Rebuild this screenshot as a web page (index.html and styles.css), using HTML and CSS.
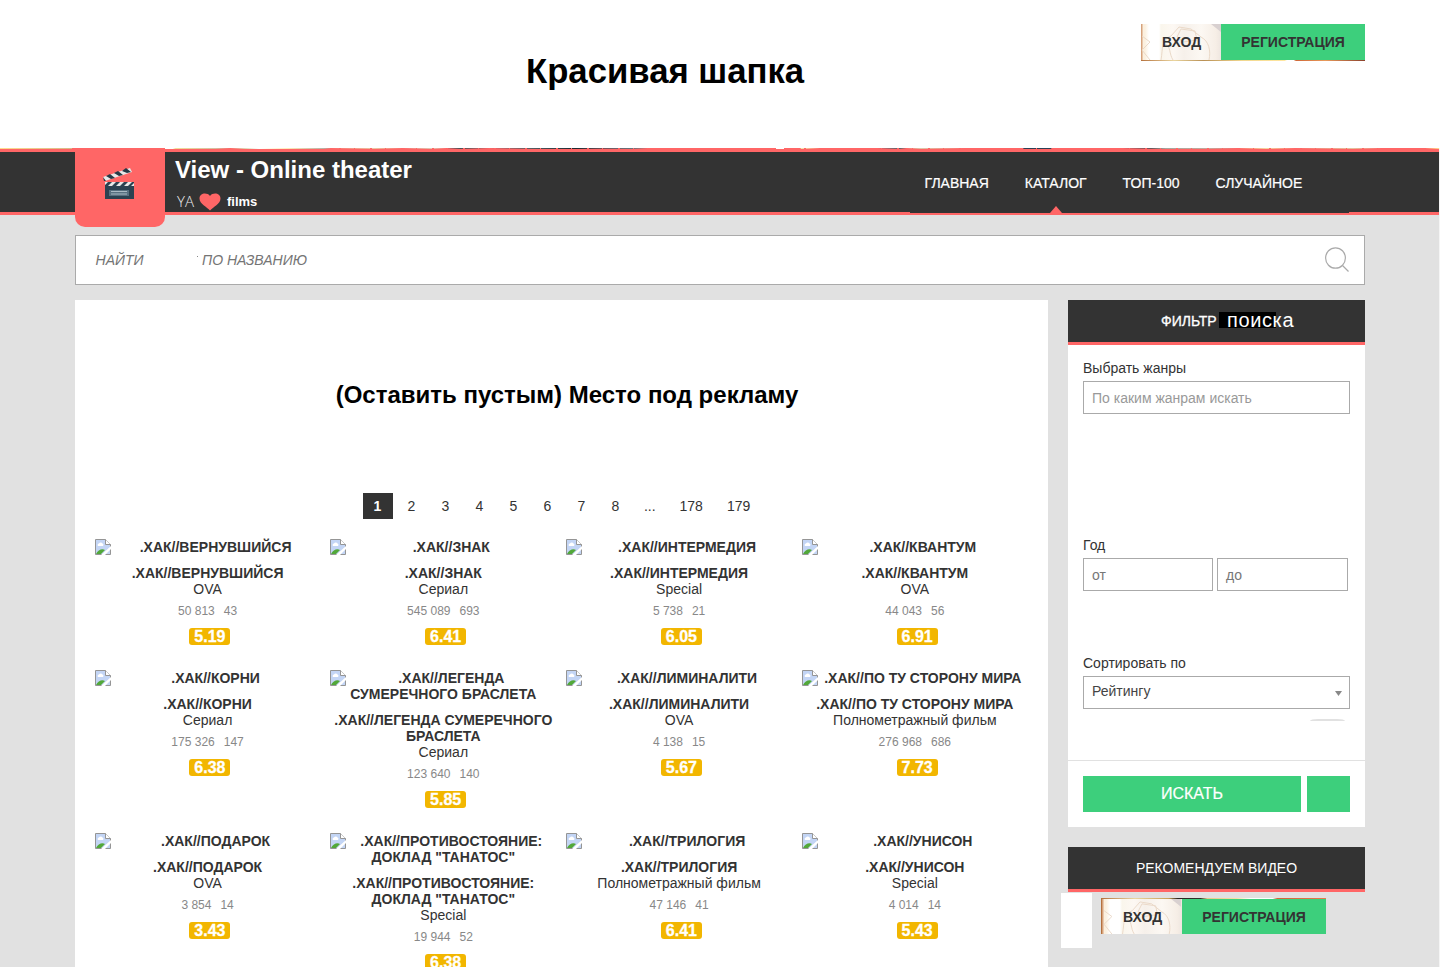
FILE: index.html
```html
<!DOCTYPE html>
<html lang="ru">
<head>
<meta charset="utf-8">
<title>View - Online theater</title>
<link rel="stylesheet" href="styles.css">
</head>
<body>
<svg class="defs" width="0" height="0"><symbol id="pic" viewBox="0 0 16 16"><path d="M.5.5h10l5 5v10H.5z" fill="#c3d5f5" stroke="#959595"/><path d="M10.500.5v5h5" fill="#fff" stroke="#959595"/><path d="M3 7a1.500 1.500 0 0 1 1-2.500 2 2 0 0 1 3.500 0A1.500 1.500 0 0 1 8 7z" fill="#fff"/><path d="M1 15c2-4 6-6 9-4l-4 4z" fill="#52a839"/><path d="M16 7v3l-6 6H6z" fill="#fff"/></symbol>
<symbol id="art" viewBox="0 0 80 36"><path d="M20 36c2-12 0-20 10-24l8-9 12 2 10 8c8 4 10 14 8 23M36 13l4-8 14 2 2 9-14 2zM24 20c6 2 4 10 8 16M1 12l8 6-8 8 8 10" fill="none" stroke="#ead9c8"/><path d="M70 0h10v8z" fill="#d8d0d0"/></symbol></svg>
<div class="page">
<header class="top"><h1>Красивая шапка</h1>
<div class="auth auth-top"><a class="login"><svg class="art"><use href="#art"/></svg><span>ВХОД</span></a><a class="reg">РЕГИСТРАЦИЯ</a></div></header>
<div class="strip"></div>
<div class="bar"><div class="wrap bar-in">
<div class="logo"><svg width="32" height="32" viewBox="0 0 32 32"><path d="M0 9 27 0l2 4L2 13z" fill="#e8e8e8"/><path d="m3 8 5 3 4-1-5-4zM11 5l5 3 4-1-5-4zM19 3l5 2 4-1-5-4zM0 9l3 4-2 0z" fill="#263845"/><path d="M2 14h29v17H2z" fill="#2c4251"/><path d="M2 14h3l-3 3zM9 14h4l-4 4H5zM17 14h4l-4 4h-4zM25 14h4l-4 4h-4zM31 15v3h-3z" fill="#e8e8e8"/><path d="M6 22h20v6H6z" fill="#577080"/><path d="M8 23.500h16M8 26h16" stroke="#a9bac4"/></svg></div>
<div class="brand"><div class="name">View - Online theater</div><div class="tag"><span class="ya">YA</span><svg width="22" height="19" viewBox="0 0 22 19"><path d="M11 18.500C8 15 .5 12 .5 6.500 .5 1 8 0 11 4 14 0 21.500 1 21.500 6.500c0 5.500-7.500 8.500-10.500 12z" fill="#f66"/></svg><b>films</b></div></div>
<nav class="menu"><a>ГЛАВНАЯ</a><a class="cur">КАТАЛОГ</a><a>ТОП-100</a><a>СЛУЧАЙНОЕ</a></nav>
</div></div>
<div class="wrap search"><span class="find">НАЙТИ</span><span class="dot"></span><span class="by">ПО НАЗВАНИЮ</span><svg width="26" height="26" viewBox="0 0 26 26"><ellipse cx="11.500" cy="11" rx="9.900" ry="10.200"/><path d="m18.500 18.500 6 6"/></svg></div>
<div class="wrap cols">
<main class="main">
<h2>(Оставить пустым) Место под рекламу</h2>
<div class="pager"><b>1</b><a>2</a><a>3</a><a>4</a><a>5</a><a>6</a><a>7</a><a>8</a><a>...</a><a class="w">178</a><a class="w">179</a></div>
<div class="grid">
<article><div class="alt"><svg class="pic"><use href="#pic"/></svg>.ХАК//ВЕРНУВШИЙСЯ</div><h3>.ХАК//ВЕРНУВШИЙСЯ</h3><p>OVA</p><div class="stat"><span>50 813</span><span>43</span></div><div class="rate">5.19</div></article>
<article><div class="alt"><svg class="pic"><use href="#pic"/></svg>.ХАК//ЗНАК</div><h3>.ХАК//ЗНАК</h3><p>Сериал</p><div class="stat"><span>545 089</span><span>693</span></div><div class="rate">6.41</div></article>
<article><div class="alt"><svg class="pic"><use href="#pic"/></svg>.ХАК//ИНТЕРМЕДИЯ</div><h3>.ХАК//ИНТЕРМЕДИЯ</h3><p>Special</p><div class="stat"><span>5 738</span><span>21</span></div><div class="rate">6.05</div></article>
<article><div class="alt"><svg class="pic"><use href="#pic"/></svg>.ХАК//КВАНТУМ</div><h3>.ХАК//КВАНТУМ</h3><p>OVA</p><div class="stat"><span>44 043</span><span>56</span></div><div class="rate">6.91</div></article>
<article><div class="alt"><svg class="pic"><use href="#pic"/></svg>.ХАК//КОРНИ</div><h3>.ХАК//КОРНИ</h3><p>Сериал</p><div class="stat"><span>175 326</span><span>147</span></div><div class="rate">6.38</div></article>
<article><div class="alt"><svg class="pic"><use href="#pic"/></svg>.ХАК//ЛЕГЕНДА<br>СУМЕРЕЧНОГО БРАСЛЕТА</div><h3>.ХАК//ЛЕГЕНДА СУМЕРЕЧНОГО<br>БРАСЛЕТА</h3><p>Сериал</p><div class="stat"><span>123 640</span><span>140</span></div><div class="rate">5.85</div></article>
<article><div class="alt"><svg class="pic"><use href="#pic"/></svg>.ХАК//ЛИМИНАЛИТИ</div><h3>.ХАК//ЛИМИНАЛИТИ</h3><p>OVA</p><div class="stat"><span>4 138</span><span>15</span></div><div class="rate">5.67</div></article>
<article><div class="alt"><svg class="pic"><use href="#pic"/></svg>.ХАК//ПО ТУ СТОРОНУ МИРА</div><h3>.ХАК//ПО ТУ СТОРОНУ МИРА</h3><p>Полнометражный фильм</p><div class="stat"><span>276 968</span><span>686</span></div><div class="rate">7.73</div></article>
<article><div class="alt"><svg class="pic"><use href="#pic"/></svg>.ХАК//ПОДАРОК</div><h3>.ХАК//ПОДАРОК</h3><p>OVA</p><div class="stat"><span>3 854</span><span>14</span></div><div class="rate">3.43</div></article>
<article><div class="alt"><svg class="pic"><use href="#pic"/></svg>.ХАК//ПРОТИВОСТОЯНИЕ:<br>ДОКЛАД "ТАНАТОС"</div><h3>.ХАК//ПРОТИВОСТОЯНИЕ:<br>ДОКЛАД "ТАНАТОС"</h3><p>Special</p><div class="stat"><span>19 944</span><span>52</span></div><div class="rate">6.38</div></article>
<article><div class="alt"><svg class="pic"><use href="#pic"/></svg>.ХАК//ТРИЛОГИЯ</div><h3>.ХАК//ТРИЛОГИЯ</h3><p>Полнометражный фильм</p><div class="stat"><span>47 146</span><span>41</span></div><div class="rate">6.41</div></article>
<article><div class="alt"><svg class="pic"><use href="#pic"/></svg>.ХАК//УНИСОН</div><h3>.ХАК//УНИСОН</h3><p>Special</p><div class="stat"><span>4 014</span><span>14</span></div><div class="rate">5.43</div></article>
</div>
</main>
<aside class="side">
<section class="panel">
<div class="head head-filter"><span>ФИЛЬТР</span><span class="big">поиска</span></div>
<div class="form">
<label>Выбрать жанры</label><div class="field ph">По каким жанрам искать</div>
<label class="year">Год</label><div class="row"><div class="field from">от</div><div class="field to">до</div></div>
<label class="sort">Сортировать по</label><div class="field select"><span>Рейтингу</span><i></i></div>
<div class="knob"></div>
</div>
<div class="actions"><button class="go">ИСКАТЬ</button><button class="sq"></button></div>
</section>
<section class="rec"><div class="head">РЕКОМЕНДУЕМ ВИДЕО</div>
<div class="float-box"></div>
<div class="auth auth-low"><a class="login"><svg class="art"><use href="#art"/></svg><span>ВХОД</span></a><a class="reg">РЕГИСТРАЦИЯ</a></div></section>
</aside>
</div>
</div>
</body>
</html>
```
FILE: styles.css
```css
* { box-sizing: border-box; margin: 0; padding: 0; }
html, body { height: 967px; overflow: hidden; }
body { font: 14px/16px "Liberation Sans", Arial, sans-serif; color: #333; background: #f5f5f5; }
.defs { position: absolute; }
.page { width: 1439px; height: 967px; background: #e1e1e1; }
.wrap { width: 1290px; margin-left: 75px; }
.top { position: relative; width: 1440px; height: 148px; background: #fff; padding: 50px 0 0 526px; }
h1 { font-size: 34.700px; line-height: 42px; color: #000; white-space: nowrap; }
.auth { position: absolute; display: flex; font-weight: bold; line-height: 36px; text-align: center; }
.auth-top { left: 1141px; top: 24px; border: solid; border-image: linear-gradient(90deg, #b4703c, #ead6a0 15%, #b99055 28%, #f0d78f 45%, #ffe6a0 64%, #fff 65%, #fff 68%, #cf6838 69%, #e89b5c 82%, #883f2b) 1; border-width: 0 0 1px; }
.login { position: relative; width: 80px; padding-left: 1px; background: linear-gradient(90deg, #d6a27b 0 1px, #fbf0df 2px 4px, #fff 8px 18px, #faf6ec 20px, #fdf8f3 32px, #f6f0ea 43px, #fcf8f3 60px, #f6eee6 75px, #eee6e0); }
.art { position: absolute; left: 0; top: 0; width: 80px; height: 36px; }
.login span { position: relative; }
.reg { width: 144px; background: #3dcf7c; }
.strip { height: 1px; background: repeating-linear-gradient(90deg, transparent 0 9px, #f66 9px 11px, transparent 11px 24px, #f66 24px 25px, transparent 25px 31px) 330px 0 / 1109px 1px no-repeat, linear-gradient(90deg, #ffdc91, #d7b989 5%, #f66 5%, #f66 11.400%, #fff 11.400%, #fff 12%, #f2de9c 12.200%, #d3bea0 15%, #f66 16%, #ded5b4 17%, #fff 18%, #ffe9b8 20%, #b6b0a4 22.500%, #f66 23%, #e9c8a4 26%, #f66 28%, #dfcbb5 30%, #f66 31%, #475156 32%, #f66 34%, #565b60 37%, #1b2830 40%, #7a525a 42%, #65757e 44%, #f66 45%, #f66 53.900%, #fff 53.900%, #fff 54.500%, #f66 54.500%, #f66 55.600%, #f4e7ad 55.700%, #f66 57%, #f66 61%, #53636b 62.500%, #f66 63%, #dcc9ab 64%, #f66 67%, #f66 71%, #2c4055 71.200%, #2c4055 73%, #f66 73.100%, #f66 78%, #6a5458 80%, #a6a59d 81%, #c4a89b 84%, #f66 86%, #f2d8a1 88%, #f66 90%, #e3c39e 94%, #f66 96%, #f66 99%, #ffdc91); }
.bar { height: 66px; background: #333; border-top: 3px solid #f66; border-bottom: 3px solid #f66; }
.bar-in { position: relative; display: flex; }
.logo { position: absolute; left: 0; top: -4px; width: 90px; height: 79px; background: #f66; border-radius: 0 0 10px 10px; padding: 20px 0 0 28px; }
.brand { padding-left: 100px; width: 835px; color: #fff; white-space: nowrap; }
.name { font: bold 24px/28px "Liberation Sans", Arial, sans-serif; padding-top: 4px; }
.tag { display: flex; align-items: center; height: 19px; margin-top: 8px; font-size: 13px; }
.tag svg { margin-right: 6px; }
.ya { width: 24px; padding-left: 2px; font: 300 15px/19px "Open Sans", "Noto Sans", sans-serif; color: #eee; }
.menu { display: flex; gap: 36px; width: 439px; height: 61px; padding-left: 14.600px; background: #333; color: #fff; line-height: 62px; white-space: nowrap; -webkit-text-stroke: .2px #fff; }
.cur { position: relative; }
.cur::after { content: ""; position: absolute; left: 25.500px; bottom: 0; border: 6px solid transparent; border-top: 0; border-bottom: 7px solid #f66; }
.search { display: flex; align-items: center; height: 50px; margin-top: 20px; padding: 0 14px 0 19.600px; border: 1px solid #aaa; background: #fff; font-style: italic; color: #757575; }
.find { width: 101.400px; }
.dot { width: 1px; height: 1px; background: #888; margin: -8px 4px 0 0; }
.search svg { margin-left: auto; fill: none; stroke: #aaa; stroke-width: 1.200; }
.cols { display: flex; justify-content: space-between; align-items: flex-start; margin-top: 15px; }
.main { width: 973px; height: 667px; background: #fff; padding: 80px 20px 0; }
h2 { font-size: 24px; line-height: 28px; padding: 1px 0 0 1px; margin-right: -10px; color: #000; width: 943px; text-align: center; }
.pager { display: flex; gap: 4px; margin: 84px 0 20px 268px; line-height: 26px; text-align: center; }
.pager b, .pager a { width: 30px; height: 26px; }
.pager b { background: #333; color: #fff; padding-right: 1px; }
.pager b + a { margin-left: -.7px; }
.pager a:nth-child(9) { width: 31px; }
.pager a.w { width: 43.500px; }
.grid { display: grid; grid-template-columns: repeat(4, 1fr); column-gap: 10px; margin: 0 .3px 0 -.3px; text-align: center; white-space: nowrap; }
article { padding-bottom: 25px; }
.alt { font-weight: bold; }
.pic { float: left; width: 16px; height: 16px; }
h3 { font-size: 14px; margin-top: 10px; }
.stat { display: flex; justify-content: center; gap: 9px; font-size: 12px; line-height: 14px; color: #888; margin-top: 7px; }
.rate { width: 41px; height: 17px; margin: 10px auto 0; position: relative; left: 2.300px; border-radius: 3px; background: #f2b600; color: #fff; font: bold 16px/17px "Liberation Sans", Arial, sans-serif; -webkit-text-stroke: .3px #fff; }
.side { width: 297px; }
.panel { height: 527px; background: #fff; }
.head { height: 45px; background: #333; border-bottom: 3px solid #f66; color: #fff; line-height: 42px; text-align: center; white-space: nowrap; }
.head-filter { display: flex; padding-left: 93px; -webkit-text-stroke: .3px #fff; }
.big { height: 16px; width: 57px; margin: 12px 0 0 2px; padding-left: 8.500px; background: #000; font: 20px/17px "Liberation Sans", Arial, sans-serif; letter-spacing: .6px; -webkit-text-stroke: 0; }
.form { height: 415px; padding: 15px 15px 0; }
label { display: block; margin-bottom: 5px; }
.field { height: 33px; padding-left: 8px; border: 1px solid #aaa; line-height: 33px; color: #777; }
.ph { color: #999; }
.year { margin-top: 123px; }
.row { display: flex; gap: 4px; }
.from { width: 130px; }
.to { width: 131px; }
.sort { margin-top: 64px; }
.select { display: flex; justify-content: space-between; padding-right: 7px; line-height: 29px; color: #444; }
.select i { margin-top: 14px; width: 7px; height: 5px; background: #888; clip-path: polygon(0 0, 100% 0, 50% 100%); }
.knob { width: 35px; height: 2px; margin: 10px 5px 0 auto; background: #e1e1e1; border-radius: 8px 8px 0 0 / 2px 2px 0 0; }
.actions { display: flex; gap: 6px; padding: 15px; border-top: 1px solid #e1e1e1; }
button { height: 36px; border: 0; background: #3dcf7c; color: #fff; font: 16px "Liberation Sans", Arial, sans-serif; }
.go { width: 218px; -webkit-text-stroke: .2px #fff; }
.sq { width: 43px; }
.rec { position: relative; margin-top: 20px; }
.float-box { position: absolute; left: -7px; top: 46px; width: 31px; height: 55px; background: #fff; }
.auth-low { left: 33px; top: 51px; height: 36px; border: solid; border-width: 1px 0 0 1px; border-image: linear-gradient(90deg, #b4703c, #ead6a0 15%, #c9a055 30%, #292321 34%, #35302c 44%, #e6c98a 47%, #f7e0a5 60%, #fff 66%, #fff 76%, #cf6838 78%, #e87b4c) 1; }
.auth-low .art { height: 35px; }
```
